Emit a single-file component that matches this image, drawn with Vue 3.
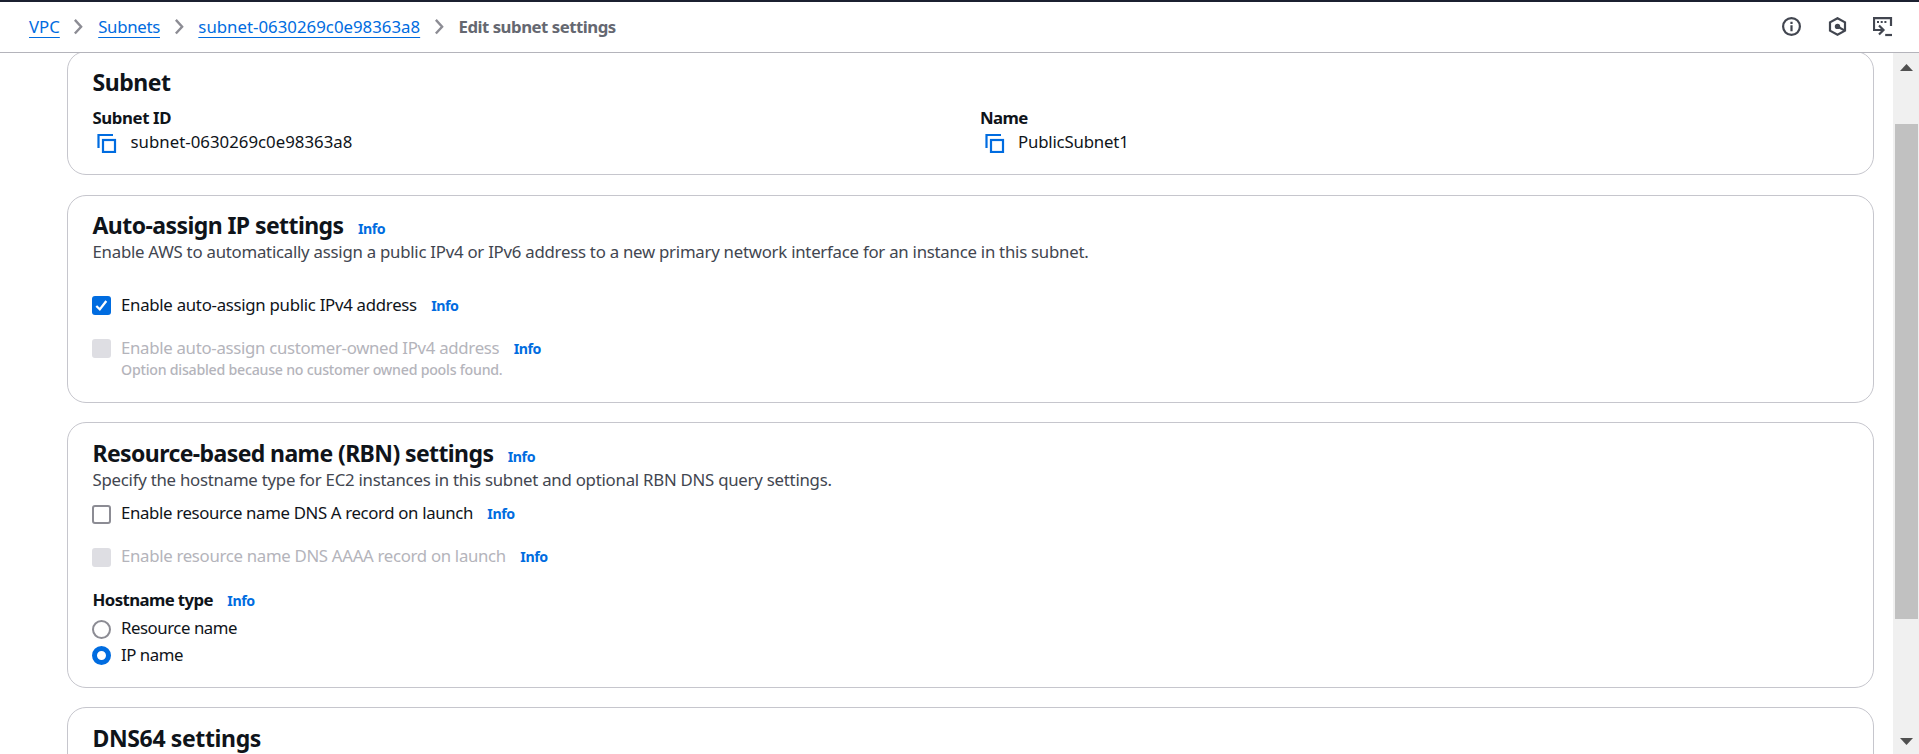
<script setup>
const crumbs = [
  { label: 'VPC', cls: 'vpc' },
  { label: 'Subnets', cls: 'subnets' },
  { label: 'subnet-0630269c0e98363a8', cls: 'sid' },
]
const details = [
  { label: 'Subnet ID', value: 'subnet-0630269c0e98363a8', cls: 'sid', labelCls: 'lid' },
  { label: 'Name', value: 'PublicSubnet1', cls: 'pub', labelCls: 'lname' },
]
</script>

<template>
  <div class="page">
    <header class="topbar">
      <nav class="crumbs">
        <template v-for="c in crumbs" :key="c.label">
          <a :class="['crumb', c.cls]">{{ c.label }}</a>
          <svg class="chev" viewBox="0 0 16 16"><path d="M4.9 2.4 10.1 8.1 4.9 13.8" /></svg>
        </template>
        <span class="current">Edit subnet settings</span>
      </nav>
      <div class="tools">
        <svg width="20" height="20" viewBox="0 0 20 20">
          <circle cx="9.5" cy="9.5" r="8.4" class="ln" />
          <path d="M9.5 8.2V14.2M9.5 4.8V7" class="ln" />
        </svg>
        <svg width="20" height="20" viewBox="0 0 20 20">
          <path d="M9.5 1.2 17 5.3V13.7L9.5 17.8 2 13.7V5.3Z" class="ln" />
          <circle cx="9.5" cy="9.4" r="2.7" class="fl" />
          <path d="M10 9.8 16.4 13.4" class="ln" />
        </svg>
        <svg width="20" height="20" viewBox="0 0 20 20">
          <path d="M18 9V1.2H1V13H10.5" class="ln" />
          <path d="M6 8.5 10.5 13 6 17.5" class="ln" />
          <path d="M4 5H6M7.7 5H9.7M11.4 5H13.4" class="ln" />
          <path d="M12.2 18H19" class="ln" />
        </svg>
      </div>
    </header>

    <div class="body">
      <main class="content">
        <section class="card c1">
          <h2 class="h-subnet">Subnet</h2>
          <div class="details">
            <div v-for="d in details" :key="d.label">
              <div :class="['label', d.labelCls]">{{ d.label }}</div>
              <div class="value">
                <svg class="copy" viewBox="0 0 20 20"><path d="M1.5 15V2H16" /><rect x="6" y="7" width="12" height="12" /></svg>
                <span :class="d.cls">{{ d.value }}</span>
              </div>
            </div>
          </div>
        </section>

        <section class="card c2">
          <div class="head"><h2 class="h-auto">Auto-assign IP settings</h2><a class="info">Info</a></div>
          <p class="desc d-auto">Enable AWS to automatically assign a public IPv4 or IPv6 address to a new primary network interface for an instance in this subnet.</p>
          <div class="row first">
            <span class="box on"><svg viewBox="0 0 19 19"><path d="M4.3 10 7.8 13.4 14.3 5" /></svg></span>
            <span class="o-pub">Enable auto-assign public IPv4 address</span><a class="info">Info</a>
          </div>
          <div class="row next off">
            <span class="box"></span>
            <span class="o-cust">Enable auto-assign customer-owned IPv4 address</span><a class="info">Info</a>
          </div>
          <p class="hint">Option disabled because no customer owned pools found.</p>
        </section>

        <section class="card c3">
          <div class="head"><h2 class="h-rbn">Resource-based name (RBN) settings</h2><a class="info">Info</a></div>
          <p class="desc d-rbn">Specify the hostname type for EC2 instances in this subnet and optional RBN DNS query settings.</p>
          <div class="row tight">
            <span class="box"></span>
            <span class="o-a">Enable resource name DNS A record on launch</span><a class="info">Info</a>
          </div>
          <div class="row next off">
            <span class="box"></span>
            <span class="o-aaaa">Enable resource name DNS AAAA record on launch</span><a class="info">Info</a>
          </div>
          <div class="row group"><span class="label l-host">Hostname type</span><a class="info">Info</a></div>
          <div class="row r1"><span class="box radio"></span><span class="o-res">Resource name</span></div>
          <div class="row r2"><span class="box radio picked"></span><span class="o-ip">IP name</span></div>
        </section>

        <section class="card c4">
          <h2 class="h-dns">DNS64 settings</h2>
        </section>
      </main>

      <div class="scroll">
        <svg class="up" viewBox="0 0 13 7"><path d="M0 7 6.5 0 13 7Z" /></svg>
        <div class="thumb"></div>
        <svg class="down" viewBox="0 0 13 7"><path d="M0 0 6.5 7 13 0Z" /></svg>
      </div>
    </div>
  </div>
</template>

<style scoped>
.page {
  height: 754px;
  overflow: hidden;
  display: flex;
  flex-direction: column;
  background: #fff;
  color: #0f141a;
  font: 16.8px/24px "Noto Sans", "Open Sans", sans-serif;
  white-space: nowrap;
}
.topbar {
  box-sizing: border-box;
  flex: none;
  height: 53px;
  border-top: 2px solid #1b2030;
  border-bottom: 1px solid #b4b4bb;
  padding: 0 26px 1px 29px;
  display: flex;
  justify-content: space-between;
  align-items: center;
  background: #fff;
}
.crumbs { display: flex; align-items: center; }
.crumb {
  color: #006ce0;
  text-decoration: underline 1px;
  text-underline-offset: 4px;
}
.subnets { letter-spacing: -0.3px; }
.sid { letter-spacing: 0.02px; }
.chev { width: 19.2px; height: 19.2px; margin: 0 9.6px; fill: none; stroke: #8c8c94; stroke-width: 2; }
.current { color: #656871; font-weight: 700; letter-spacing: -0.5px; }
.tools { display: flex; gap: 25.5px; align-items: center; }
.ln { fill: none; stroke: #424650; stroke-width: 2.2; }
.fl { fill: #424650; }

.body { flex: 1; min-height: 0; display: flex; }
.content { flex: 1; overflow: hidden; padding: 0 19px 0 67px; }
.card { box-sizing: border-box; border: 1px solid #c6c6cd; border-radius: 19px; padding: 14px 24px 0; }
.c1 { height: 124px; margin-top: -2px; padding-top: 15px; }
.c2 { height: 208px; margin-top: 20px; }
.c3 { height: 266px; margin-top: 19px; padding-top: 15px; }
.c4 { height: 200px; margin-top: 19px; padding-top: 15px; }

h2 { margin: 0 0 0 0.5px; font-size: 23px; line-height: 30px; font-weight: 700; }
.h-subnet { letter-spacing: -0.45px; }
.h-auto { letter-spacing: -0.57px; }
.h-rbn { letter-spacing: -0.6px; }
.h-dns { letter-spacing: -0.37px; }
.head { display: flex; align-items: baseline; height: 30px; }
.info { color: #006ce0; font-size: 14.2px; font-weight: 700; letter-spacing: -0.45px; margin-left: 14.4px; }

.details { display: grid; grid-template-columns: 887.5px 1fr; margin-top: 9px; }
.label { font-weight: 700; margin-left: 0.5px; }
.lid { letter-spacing: -0.4px; }
.lname { letter-spacing: -0.6px; }
.value { display: flex; padding-left: 5px; }
.copy { width: 20px; height: 20px; margin: 3px 13.5px 0 0; fill: none; stroke: #006ce0; stroke-width: 2.2; }
.pub { letter-spacing: -0.18px; }

.desc { margin: 0 0 0 0.5px; color: #424650; }
.d-auto { letter-spacing: -0.246px; }
.d-rbn { letter-spacing: -0.24px; }
.row { display: flex; align-items: baseline; height: 24px; }
.row.first { margin-top: 29px; }
.row.next { margin-top: 19px; }
.row.tight { margin-top: 9px; }
.row.group { margin-top: 20px; }
.row.r1 { margin-top: 4px; }
.row.r2 { margin-top: 3px; }
.off { color: #b4b4bb; }
.box {
  box-sizing: border-box;
  flex: none;
  align-self: flex-start;
  width: 19px;
  height: 19px;
  margin: 4px 10px 0 0;
  border: 2px solid #8c8c94;
  border-radius: 3px;
}
.c2 .box, .r2 .box { margin-top: 3px; }
.off .box { background: #dedee3; border-color: #dedee3; }
.on { background: #006ce0; border: 0; }
.on svg { display: block; width: 19px; height: 19px; fill: none; stroke: #fff; stroke-width: 2.3; }
.radio { border-radius: 50%; }
.picked { border: 5.5px solid #006ce0; }
.o-pub { letter-spacing: -0.28px; }
.o-cust { letter-spacing: -0.3px; }
.o-a { letter-spacing: -0.35px; }
.o-aaaa { letter-spacing: -0.31px; }
.o-res { letter-spacing: -0.45px; }
.o-ip { letter-spacing: -0.45px; }
.l-host { letter-spacing: -0.6px; }
.hint { margin: 0 0 0 29px; font-size: 14.2px; font-weight: 500; line-height: 19px; letter-spacing: -0.24px; color: #b4b4bb; }

.scroll { flex: none; width: 26px; background: #f0f0f0; display: flex; flex-direction: column; align-items: center; }
.scroll svg { width: 13px; height: 7px; fill: #505050; }
.up { margin-top: 11px; }
.thumb { width: 23px; height: 495px; margin: 53px 0 0 1px; background: #c1c1c1; }
.down { margin-top: 119px; }
</style>
